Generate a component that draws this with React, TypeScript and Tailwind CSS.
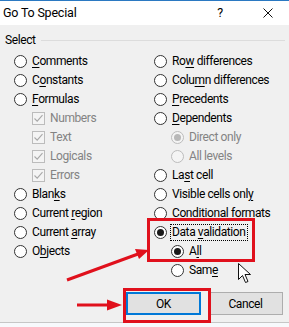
import React from 'react';

type Opt = { label: React.ReactNode; kind: 'radio' | 'check' | 'subradio'; checked?: boolean; disabled?: boolean; focus?: boolean };

const u = (s: string, i: number) => (
  <>
    {s.slice(0, i)}
    <u className="underline-offset-2">{s[i]}</u>
    {s.slice(i + 1)}
  </>
);

function Radio({ checked, disabled }: { checked?: boolean; disabled?: boolean }) {
  return (
    <span
      className={`flex h-[13px] w-[13px] shrink-0 items-center justify-center rounded-full border ${
        disabled ? 'border-[#bcbcbc] bg-[#f4f4f4]' : 'border-[#333] bg-white'
      }`}
    >
      {checked && <span className={`h-[7px] w-[7px] rounded-full ${disabled ? 'bg-[#b8b8b8]' : 'bg-[#1a1a1a]'}`} />}
    </span>
  );
}

function Check() {
  return (
    <span className="flex h-[13px] w-[13px] shrink-0 items-center justify-center border border-[#bcbcbc] bg-[#f4f4f4]">
      <svg width="11" height="11" viewBox="0 0 11 11">
        <path d="M1.5 5.5 L4.2 8.2 L9.5 2.2" fill="none" stroke="#a8a8a8" strokeWidth="1.1" />
      </svg>
    </span>
  );
}

function Row({ o }: { o: Opt }) {
  const indent = o.kind === 'radio' ? '' : o.kind === 'check' ? 'pl-[18px]' : 'pl-[17px]';
  return (
    <div className={`flex h-[19px] items-center ${indent}`}>
      {o.kind === 'check' ? <Check /> : <Radio checked={o.checked} disabled={o.disabled} />}
      <span
        className={`ml-[3px] leading-[15px] ${o.disabled ? 'text-[#838383]' : 'text-black'} ${
          o.focus ? 'border border-dotted border-black px-[1px]' : 'px-[2px]'
        }`}
      >
        {o.label}
      </span>
    </div>
  );
}

const left: Opt[] = [
  { label: u('Comments', 0), kind: 'radio' },
  { label: u('Constants', 1), kind: 'radio' },
  { label: u('Formulas', 0), kind: 'radio' },
  { label: 'Numbers', kind: 'check', disabled: true },
  { label: 'Text', kind: 'check', disabled: true },
  { label: 'Logicals', kind: 'check', disabled: true },
  { label: 'Errors', kind: 'check', disabled: true },
  { label: u('Blanks', 4), kind: 'radio' },
  { label: u('Current region', 8), kind: 'radio' },
  { label: u('Current array', 8), kind: 'radio' },
  { label: u('Objects', 1), kind: 'radio' },
];

const right: Opt[] = [
  { label: u('Row differences', 2), kind: 'radio' },
  { label: u('Column differences', 4), kind: 'radio' },
  { label: u('Precedents', 0), kind: 'radio' },
  { label: u('Dependents', 0), kind: 'radio' },
  { label: 'Direct only', kind: 'subradio', checked: true, disabled: true },
  { label: 'All levels', kind: 'subradio', disabled: true },
  { label: u('Last cell', 2), kind: 'radio' },
  { label: u('Visible cells only', 17), kind: 'radio' },
  { label: u('Conditional formats', 5), kind: 'radio' },
  { label: u('Data validation', 5), kind: 'radio', checked: true, focus: true },
  { label: u('All', 1), kind: 'subradio', checked: true },
  { label: u('Same', 3), kind: 'subradio' },
];

export default function App() {
  return (
    <div
      className="relative h-[327px] w-[289px] overflow-hidden bg-[#f0f0f0] text-[12px] tracking-[-0.4px] text-black"
      style={{ fontFamily: 'Roboto, "Noto Sans", sans-serif' }}
    >
      {/* title bar */}
      <div className="flex h-[25px] items-center border-t border-[#2b79c2] bg-white pl-[3px] text-[12.5px] tracking-[-0.2px]">
        <span>Go To Special</span>
        <span className="ml-auto mr-[40px]">?</span>
        <svg width="10" height="10" viewBox="0 0 10 10" className="mr-[16px]">
          <path d="M0.5 0.5 L9.5 9.5 M9.5 0.5 L0.5 9.5" stroke="#111" strokeWidth="1" />
        </svg>
      </div>

      {/* group */}
      <div className="flex h-[16px] items-center mt-[7px] pl-[5px]">
        <span>Select</span>
        <span className="ml-[5px] mr-[4px] h-px flex-1 bg-[#dcdcdc]" />
      </div>

      <div className="mt-[4px] grid grid-cols-[140px_1fr] pl-[14px]">
        <div>
          {left.map((o, i) => (
            <Row key={i} o={o} />
          ))}
        </div>
        <div>
          {right.map((o, i) => (
            <Row key={i} o={o} />
          ))}
        </div>
      </div>

      {/* buttons */}
      <div className="mt-[12px] flex gap-[7px] pl-[126px]">
        <button className="h-[23px] w-[75px] border-2 border-[#0078d7] bg-[#e1e1e1]">OK</button>
        <button className="h-[23px] w-[75px] border border-[#adadad] bg-[#e1e1e1]">Cancel</button>
      </div>

      {/* excel sheet peeking below */}
      <div className="absolute bottom-0 left-0 h-[5px] w-full border-t border-[#c6c6c6] bg-[#f7f9fc]" />

      {/* annotations */}
      <div className="absolute left-[147px] top-[218px] h-[44px] w-[108px] border-[3px] border-[#e0101c]" />
      <div className="absolute left-[123px] top-[288px] h-[35px] w-[88px] border-[3px] border-[#e0101c]" />
      <svg className="absolute left-0 top-0" width="289" height="327" viewBox="0 0 289 327">
        <path d="M67 280 L138 254" stroke="#e0101c" strokeWidth="3" />
        <path d="M149 250 L135 249 L139 259 Z" fill="#e0101c" />
        <path d="M77 305 L110 305" stroke="#e0101c" strokeWidth="3" />
        <path d="M122 305 L107 299.5 L107 310.5 Z" fill="#e0101c" />
        <path
          d="M238.5 263.5 L238.5 279.5 L242.5 275.5 L245.5 282.5 L248 281.5 L245 274.5 L250.5 274.5 Z"
          fill="white"
          stroke="#111"
          strokeWidth="1"
          strokeLinejoin="miter"
        />
      </svg>
    </div>
  );
}
